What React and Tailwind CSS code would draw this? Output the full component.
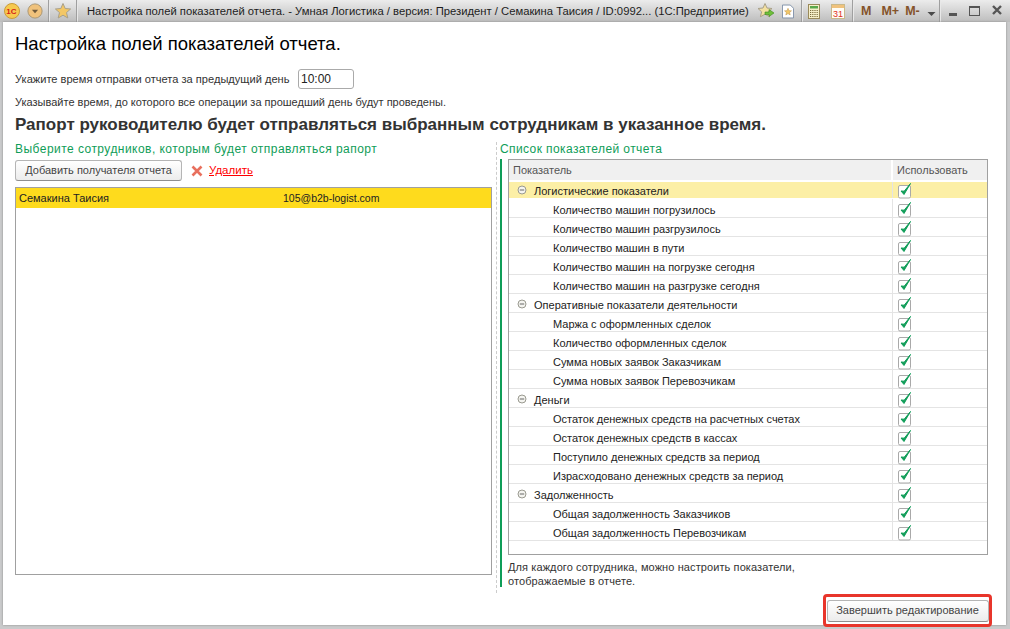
import React from "react";

const groups = [
  ["Логистические показатели", ["Количество машин погрузилось", "Количество машин разгрузилось", "Количество машин в пути", "Количество машин на погрузке сегодня", "Количество машин на разгрузке сегодня"]],
  ["Оперативные показатели деятельности", ["Маржа с оформленных сделок", "Количество оформленных сделок", "Сумма новых заявок Заказчикам", "Сумма новых заявок Перевозчикам"]],
  ["Деньги", ["Остаток денежных средств на расчетных счетах", "Остаток денежных средств в кассах", "Поступило денежных средств за период", "Израсходовано денежных средств за период"]],
  ["Задолженность", ["Общая задолженность Заказчиков", "Общая задолженность Перевозчикам"]],
];

const Check = () => (
  <svg width="15" height="17" viewBox="0 0 15 17" className="block">
    <rect x="0.5" y="3.5" width="12" height="12.5" rx="1.5" fill="#fff" stroke="#a9a9a9" />
    <path d="M3 9 L6 12.5 L12.5 1.5 L6.2 9.2 Z" fill="#0f9d58" stroke="#0f9d58" strokeWidth="1" strokeLinejoin="round" />
  </svg>
);

const Collapse = () => (
  <svg width="10" height="10" viewBox="0 0 10 10" className="block">
    <circle cx="5" cy="5" r="4" fill="#f4f4f0" stroke="#9a9a90" />
    <path d="M2.8 5 H7.2" stroke="#666" strokeWidth="1" />
  </svg>
);

const Row = ({ text, group, active }) => (
  <div className={`flex border-b border-[#e4e4e4] ${active ? "h-[17px] bg-[#fcefa6] border-white" : "h-[19px] bg-white"}`}>
    <div className={`w-[384px] flex items-center shrink-0 border-r border-[#e4e4e4] ${active ? "pt-[2px]" : "pt-[4px]"} ${group ? "pl-[8px]" : "pl-[44px]"}`}>
      {group && <span className="mr-[7px] -mt-[2px]"><Collapse /></span>}
      <span className="text-[#222] whitespace-nowrap">{text}</span>
    </div>
    <div className={`flex-1 pl-[5px] ${active ? "" : "pt-[2px]"}`}><Check /></div>
  </div>
);

const Star = ({ size = 18 }) => (
  <svg width={size} height={size} viewBox="0 0 18 18">
    <path d="M9 1.5 L11.2 6.5 L16.6 7 L12.5 10.6 L13.8 16 L9 13.2 L4.2 16 L5.5 10.6 L1.4 7 L6.8 6.5 Z" fill="#f3c766" stroke="#a8a08a" strokeWidth="1" strokeLinejoin="round" />
  </svg>
);

const Sep = () => <div className="w-px h-[22px] bg-[#9f9f9f] border-r border-[#e8e8e8] box-content" />;

const Mem = ({ children, cls }) => <span className={`text-[#84532a] font-bold text-[12.5px] leading-none ${cls}`}>{children}</span>;

export default function App() {
  return (
    <div className="w-[1010px] h-[629px] overflow-hidden bg-[#c9cacb] text-[11px] leading-[13px] text-[#333] flex flex-col" style={{ fontFamily: '"Liberation Sans", Arial, sans-serif' }}>
      <div className="h-[22px] shrink-0 flex items-center bg-gradient-to-b from-[#ececec] to-[#bdbdbd]">
        <svg width="16" height="16" viewBox="0 0 16 16" className="ml-[4px]">
          <circle cx="8" cy="8" r="7.5" fill="#f7c94f" stroke="#c99b3a" />
          <text x="2.2" y="11" fontSize="8" fontWeight="700" fill="#d4231a" fontFamily="Liberation Sans">1C</text>
        </svg>
        <svg width="16" height="16" viewBox="0 0 18 18" className="ml-[7px]">
          <circle cx="9" cy="9" r="8" fill="#f0c27c" stroke="#a5916e" />
          <path d="M5.5 7.5 H12.5 L9 11.5 Z" fill="#6f5a3c" />
        </svg>
        <div className="ml-[5px]"><Sep /></div>
        <div className="ml-[4px]"><Star size={18} /></div>
        <div className="ml-[4px]"><Sep /></div>
        <span className="ml-[9px] text-[11.25px] text-[#1c1c1c] whitespace-nowrap w-[666px]">Настройка полей показателей отчета. - Умная Логистика / версия: Президент / Семакина Таисия / ID:0992... (1С:Предприятие)</span>
        <svg width="18" height="18" viewBox="0 0 18 18" className="ml-[4px]">
          <path d="M8 1.5 L10 6 L15 6.5 L11.4 9.8 L12.6 14.8 L8 12.2 L3.4 14.8 L4.6 9.8 L1 6.5 L6 6 Z" fill="#f3e0a0" stroke="#a8a08a" />
          <path d="M8 10 H12 V7.5 L17 11 L12 14.5 V12.5 H8 Z" fill="#6fbf3a" stroke="#3c8a1c" strokeWidth="0.6" />
        </svg>
        <svg width="12" height="15" viewBox="0 0 13 15" className="ml-[7px]">
          <path d="M.5.5 H9 L12.5 4 V14.5 H.5 Z" fill="#fff" stroke="#7d8ea6" />
          <path d="M6.5 4 L7.6 6.6 L10.3 6.8 L8.2 8.6 L8.9 11.2 L6.5 9.8 L4.1 11.2 L4.8 8.6 L2.7 6.8 L5.4 6.6 Z" fill="#f3c766" stroke="#b58a3a" strokeWidth="0.5" />
        </svg>
        <div className="ml-[7px]"><Sep /></div>
        <svg width="12" height="15" viewBox="0 0 12 15" className="ml-[5px]">
          <rect x=".5" y=".5" width="11" height="14" fill="#f6efc8" stroke="#9a8a5a" />
          <rect x="2" y="2" width="8" height="2.5" fill="#5aa84a" />
          <path d="M2 6.5H10M2 8.5H10M2 10.5H10M2 12.5H10" stroke="#7a6a3a" strokeDasharray="1.2 1" />
        </svg>
        <svg width="14" height="15" viewBox="0 0 14 15" className="ml-[11px]">
          <rect x=".5" y=".5" width="13" height="14" fill="#fffdf5" stroke="#c9b98a" />
          <rect x="1" y="1" width="12" height="3" fill="#f0c27c" />
          <text x="2" y="13" fontSize="9" fill="#e0301e" fontFamily="Liberation Sans">31</text>
        </svg>
        <div className="ml-[7px]"><Sep /></div>
        <Mem cls="ml-[7px]">M</Mem>
        <Mem cls="ml-[10px]">M+</Mem>
        <Mem cls="ml-[6px]">M-</Mem>
        <svg width="9" height="6" viewBox="0 0 9 6" className="ml-[7px] mt-[7px]">
          <path d="M.5 0 H8.5 L4.5 4 Z" fill="#4a4a4a" />
        </svg>
        <div className="ml-[3px]"><Sep /></div>
        <div className="ml-[8px] mt-[7px] w-[8px] h-[3px] bg-[#555]" />
        <div className="ml-[12px] w-[11px] h-[10px] border border-[#555] border-t-2" />
        <svg width="10" height="10" viewBox="0 0 10 10" className="ml-[12px] -mt-[2px]">
          <path d="M1 1 L9 9 M9 1 L1 9" stroke="#555" strokeWidth="2.4" />
        </svg>
      </div>

      <div className="relative ml-[3px] mr-[4px] h-[603px] bg-white pl-[12px] shadow-[0_0_2px_#888]">
        <h1 className="pt-[10px] h-[47px] text-[18.5px] leading-[23px] font-normal text-black whitespace-nowrap">Настройка полей показателей отчета.</h1>
        <div className="flex items-center h-[20px]">
          <span className="w-[283px] text-[11.08px]">Укажите время отправки отчета за предыдущий день</span>
          <div className="w-[56px] h-[20px] border border-[#aaa] rounded-[3px] pl-[2px] text-[12px] leading-[18px] text-[#222]">10:00</div>
        </div>
        <div className="mt-[7px] h-[13px]">Указывайте время, до которого все операции за прошедший день будут проведены.</div>
        <div className="mt-[6px] h-[20px] text-[17px] leading-[20px] font-bold text-[#333] whitespace-nowrap">Рапорт руководителю будет отправляться выбранным сотрудникам в указанное время.</div>

        <div className="flex mt-[7px]">
          <div className="w-[477px] shrink-0">
            <div className="h-[15px] text-[12px] leading-[15px] text-[#0f9d58] tracking-[0.46px] whitespace-nowrap">Выберите сотрудников, которым будет отправляться рапорт</div>
            <div className="flex items-center mt-[3px] h-[21px]">
              <button className="w-[167px] h-[21px] rounded-[3px] border border-[#b5b5b5] border-b-[#8f8f8f] bg-gradient-to-b from-white to-[#ececec] text-[#444] text-[11px]">Добавить получателя отчета</button>
              <svg width="12" height="12" viewBox="0 0 12 12" className="ml-[9px]">
                <path d="M1.5 1.5 L10.5 10.5 M10.5 1.5 L1.5 10.5" stroke="#e8705e" strokeWidth="2.6" />
              </svg>
              <span className="ml-[6px] text-[11.5px] text-[#f00] underline">Удалить</span>
            </div>
            <div className="mt-[6px] h-[388px] border border-[#a0a0a0]">
              <div className="h-[20px] bg-[#fedb1d] flex items-center pl-[3px] text-[#222]">
                <span className="w-[264px]">Семакина Таисия</span>
                <span className="text-[10.5px]">105@b2b-logist.com</span>
              </div>
            </div>
          </div>

          <div className="ml-[4px] w-px h-[451px] border-l border-dashed border-[#ccc] shrink-0" />

          <div className="ml-[3px] w-[488px] shrink-0">
            <div className="h-[15px] text-[12px] leading-[15px] text-[#0f9d58] tracking-[0.4px] whitespace-nowrap">Список показателей отчета</div>
            <div className="border-l-[2px] border-[#0f9d58] pl-[6px] h-[428px] mt-[2px]">
              <div className="h-[396px] w-[480px] border border-[#a0a0a0] bg-white">
                <div className="flex h-[22px] bg-[#f0f0f0] border-b-2 border-white items-center text-[#555]">
                  <div className="w-[384px] pl-[4px] shrink-0 border-r-2 border-white h-full leading-[20px]">Показатель</div>
                  <div className="pl-[4px] h-full leading-[20px]">Использовать</div>
                </div>
                {groups.map(([title, items], gi) => (
                  <React.Fragment key={title}>
                    <Row text={title} group active={gi === 0} />
                    {items.map((t) => <Row key={t} text={t} />)}
                  </React.Fragment>
                ))}
              </div>
              <div className="mt-[5px] w-[320px] leading-[14px] tracking-[0.1px]">Для каждого сотрудника, можно настроить показатели, отображаемые в отчете.</div>
            </div>
          </div>
        </div>

        <div className="absolute left-[820px] top-[572px] w-[169px] h-[33px] rounded-[4px] border-[3px] border-[#e8352b] flex items-center justify-center p-0">
          <button className="w-[162px] h-[22px] rounded-[3px] border border-[#b5b5b5] border-b-[#8f8f8f] bg-gradient-to-b from-white to-[#ececec] text-[#444] text-[11px]">Завершить редактирование</button>
        </div>
      </div>
    </div>
  );
}
